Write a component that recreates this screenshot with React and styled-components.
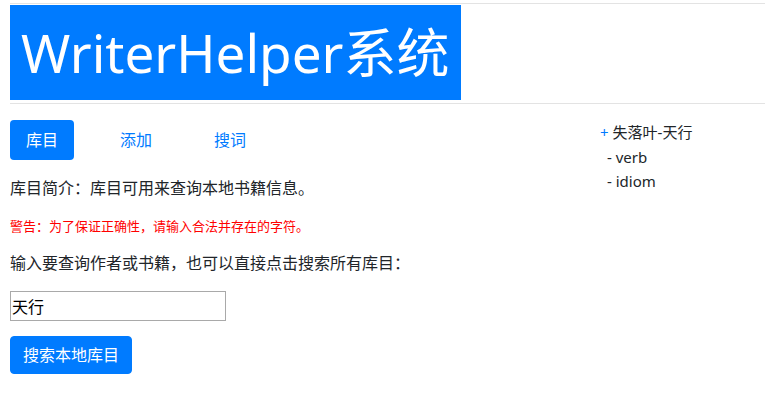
import React from 'react'
import styled, { createGlobalStyle } from 'styled-components'

const GlobalStyle = createGlobalStyle`
  body {
    margin: 0;
    font-family: "Noto Sans", "Noto Sans CJK SC", sans-serif;
    color: #212529;
    background: #fff;
  }
`

const Page = styled.div`
  padding: 3px 0 0 10px;
`

const Rule = styled.div`
  height: 1px;
  background: #e3e3e3;
`

const Title = styled.h1`
  display: inline-block;
  margin: 1px 0 3px;
  padding: 13px 12px 13px 11px;
  background: #007bff;
  color: #fff;
  font-family: "Noto Sans", "Noto Sans CJK SC", sans-serif;
  font-weight: 400;
  font-size: 53px;
  line-height: 69px;
`

const Body = styled.div`
  display: flex;
  padding-top: 16px;
`

const Main = styled.div`
  width: 590px;
`

const Side = styled.div`
  flex: 1;
  font-size: 15px;
  line-height: 24.5px;
`

const Nav = styled.div`
  display: flex;
  gap: 30px;
`

const Tab = styled.a`
  display: block;
  padding: 8px 16px;
  font-size: 16px;
  line-height: 24px;
  border-radius: 4px;
  color: ${p => (p.$active ? '#fff' : '#007bff')};
  background: ${p => (p.$active ? '#007bff' : 'transparent')};
  cursor: pointer;
`

const Para = styled.p`
  margin: ${p => p.$gap || '16px'} 0 0;
  font-size: 16px;
  line-height: 24px;
`

const Warn = styled.p`
  margin: 16px 0 0;
  font-size: 13px;
  line-height: 20px;
  color: #ff0000;
`

const Input = styled.input`
  display: block;
  margin-top: 16px;
  width: 216px;
  height: 30px;
  box-sizing: border-box;
  border: 1px solid #a9a9a9;
  padding: 0 1px;
  font-family: "Noto Sans CJK SC", sans-serif;
  font-size: 16px;
  color: #000;
  outline: none;
`

const Button = styled.button`
  display: block;
  margin-top: 15px;
  padding: 6px 12px;
  border: 1px solid #007bff;
  border-radius: 4px;
  background: #007bff;
  color: #fff;
  font-family: "Noto Sans", "Noto Sans CJK SC", sans-serif;
  font-size: 16px;
  line-height: 24px;
`

const Node = styled.div`
  padding-left: ${p => (p.$child ? '7px' : '0')};
`

const Plus = styled.span`
  color: #007bff;
  margin-right: 4px;
`

export default function App() {
  return (
    <Page>
      <GlobalStyle />
      <Rule />
      <Title>WriterHelper系统</Title>
      <Rule />
      <Body>
        <Main>
          <Nav>
            <Tab $active>库目</Tab>
            <Tab>添加</Tab>
            <Tab>搜词</Tab>
          </Nav>
          <Para>库目简介：库目可用来查询本地书籍信息。</Para>
          <Warn>警告：为了保证正确性，请输入合法并存在的字符。</Warn>
          <Para $gap="15px">输入要查询作者或书籍，也可以直接点击搜索所有库目：</Para>
          <Input defaultValue="天行" />
          <Button>搜索本地库目</Button>
        </Main>
        <Side>
          <Node><Plus>+</Plus>失落叶-天行</Node>
          <Node $child>- verb</Node>
          <Node $child>- idiom</Node>
        </Side>
      </Body>
    </Page>
  )
}
